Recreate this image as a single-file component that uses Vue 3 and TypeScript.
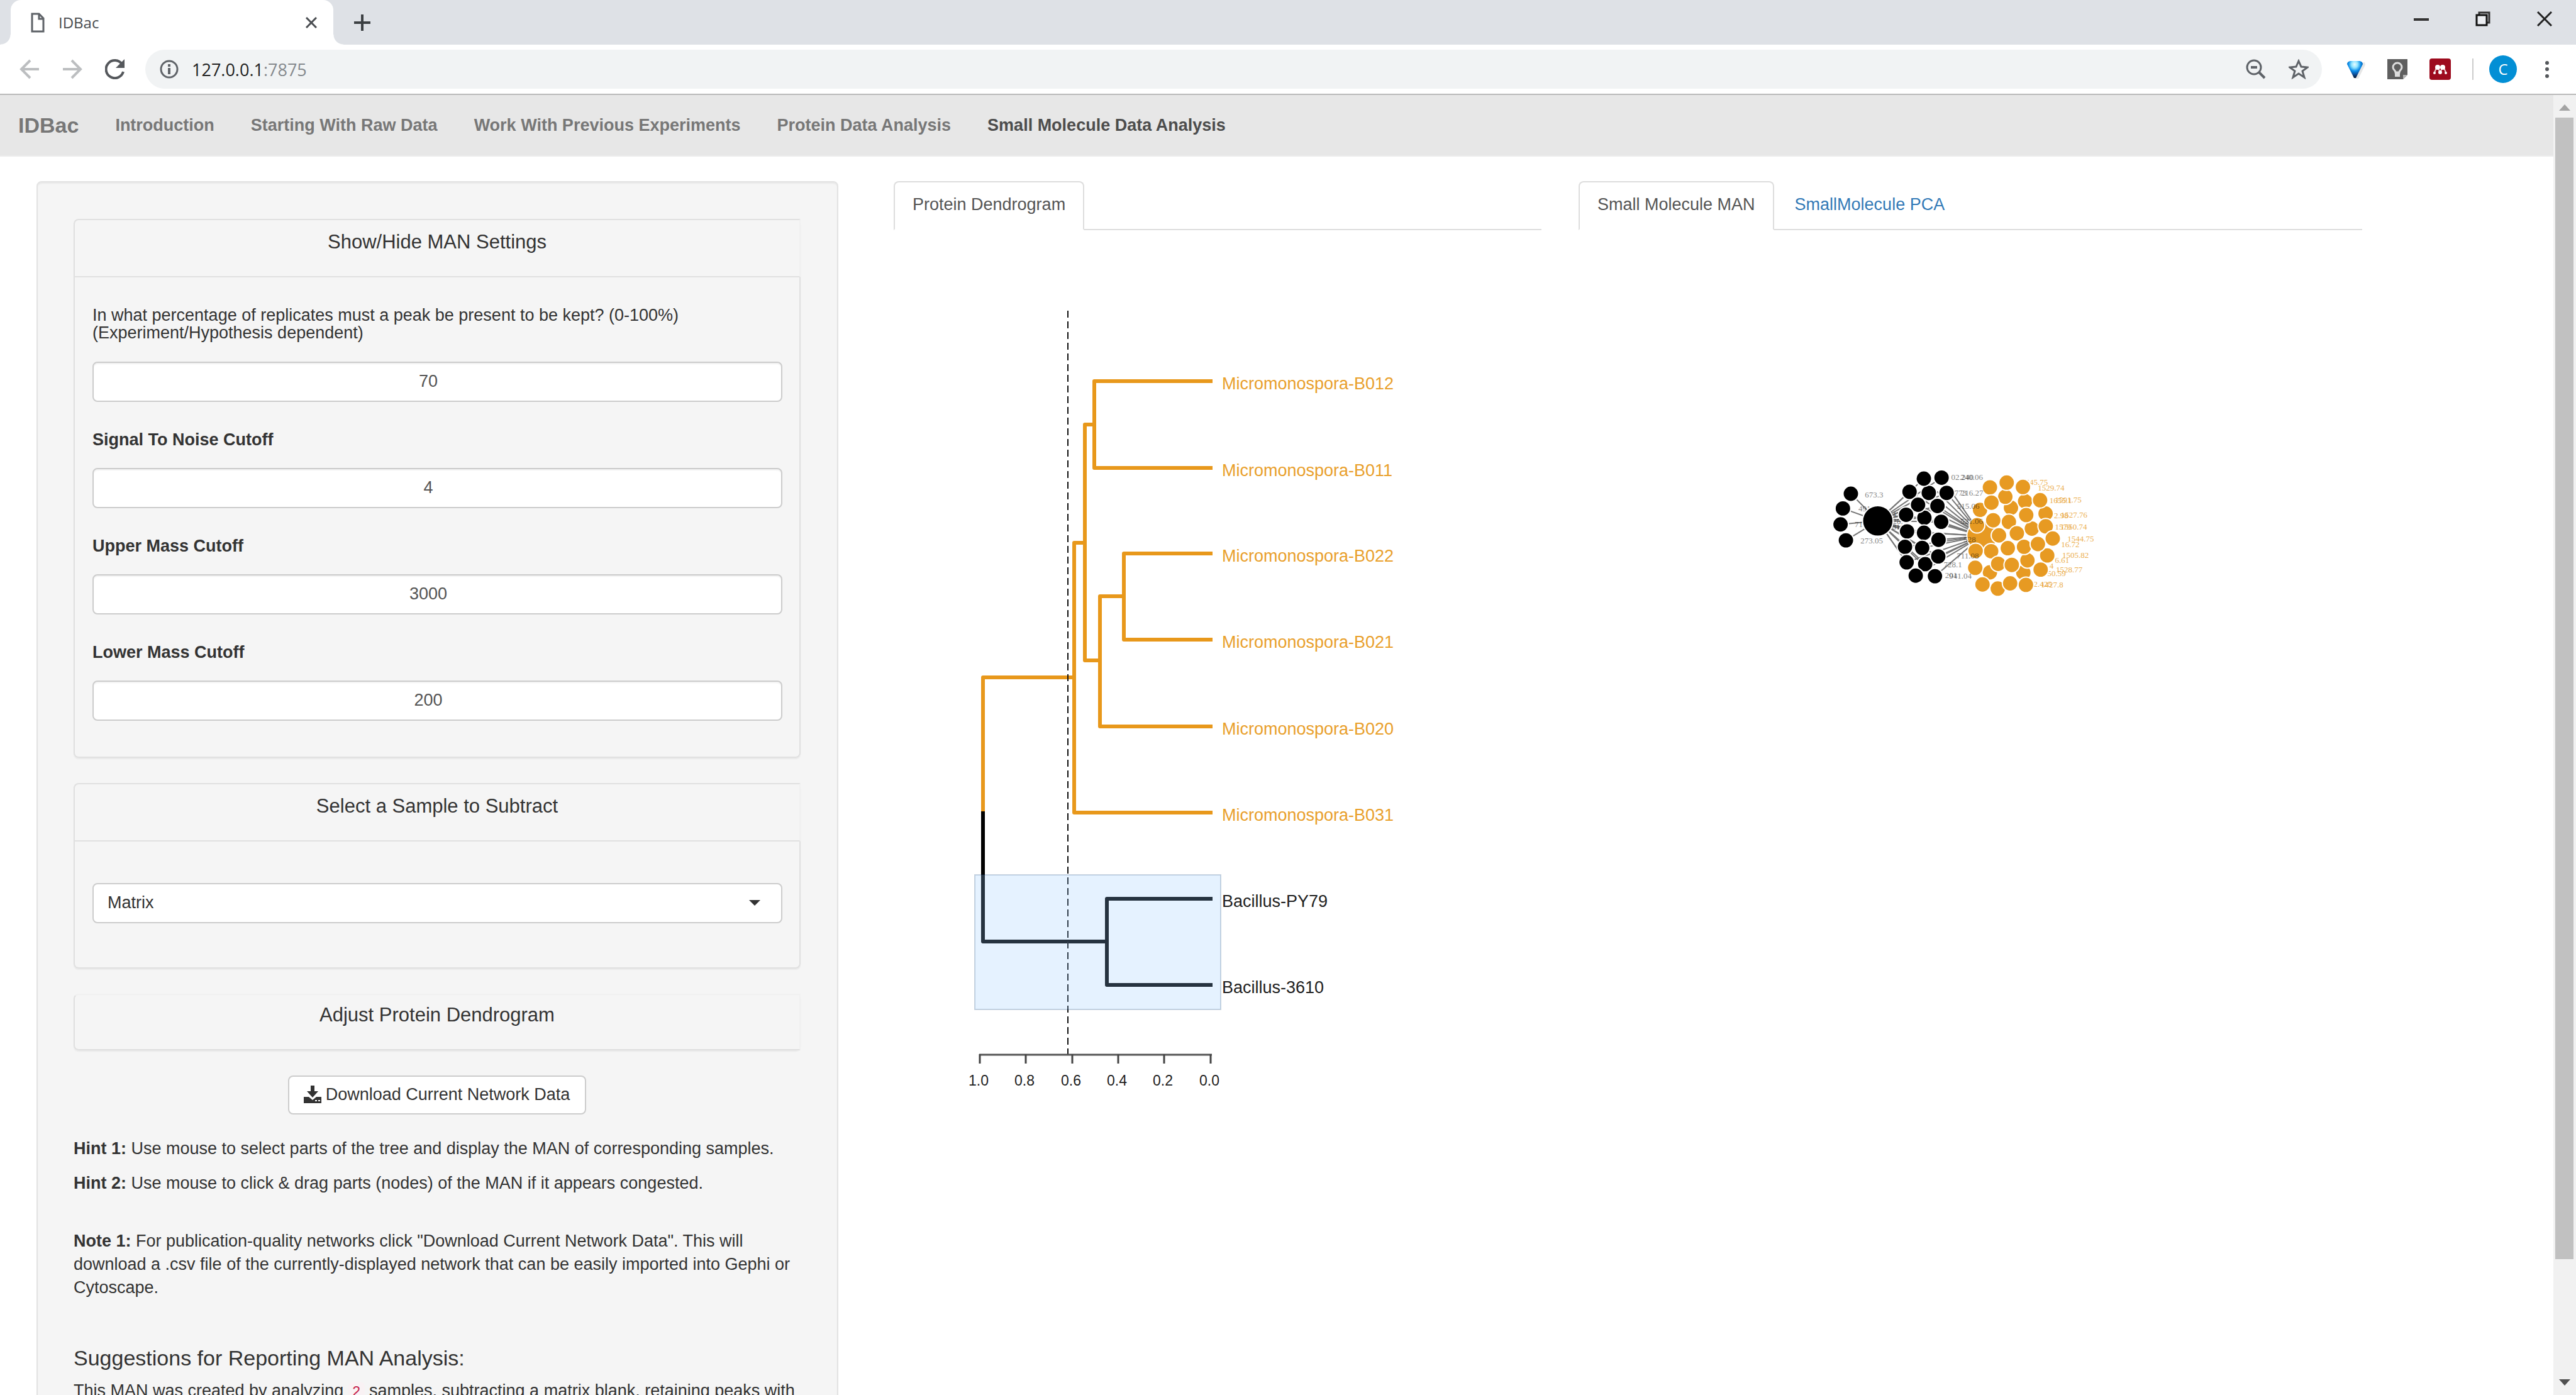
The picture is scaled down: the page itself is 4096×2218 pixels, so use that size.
<script setup lang="ts">
import { ref } from 'vue'

interface Label { x: number; y: number; text: string }
interface Dot { x: number; y: number; r: number }

const navItems = [
  'Introduction',
  'Starting With Raw Data',
  'Work With Previous Experiments',
  'Protein Data Analysis',
  'Small Molecule Data Analysis',
]
const activeNav = 'Small Molecule Data Analysis'

const replicates = ref(70)
const cutoffs = ref([
  { id: 'snr', label: 'Signal To Noise Cutoff', value: 4 },
  { id: 'upper', label: 'Upper Mass Cutoff', value: 3000 },
  { id: 'lower', label: 'Lower Mass Cutoff', value: 200 },
])
const sample = ref('Matrix')

const leaves = [
  { name: 'Micromonospora-B012', y: 240, group: 'orange' },
  { name: 'Micromonospora-B011', y: 378, group: 'orange' },
  { name: 'Micromonospora-B022', y: 514, group: 'orange' },
  { name: 'Micromonospora-B021', y: 651, group: 'orange' },
  { name: 'Micromonospora-B020', y: 789, group: 'orange' },
  { name: 'Micromonospora-B031', y: 926, group: 'orange' },
  { name: 'Bacillus-PY79', y: 1063, group: 'black' },
  { name: 'Bacillus-3610', y: 1200, group: 'black' },
]
const orangeBranches = [
  'M507 240H319V378H507',
  'M507 514H366V651H507',
  'M366 582H328V789H507',
  'M319 309H304V684H328',
  'M304 497H287V926H507',
  'M287 711H142V924',
]
const blackBranches = ['M142 924V1131H339', 'M507 1063H339V1200H507']
const ticks = [
  { x: 137, text: '1.0' },
  { x: 210, text: '0.8' },
  { x: 284, text: '0.6' },
  { x: 357, text: '0.4' },
  { x: 430, text: '0.2' },
  { x: 504, text: '0.0' },
]

// Network coordinates are kept in layout units and scaled when drawn.
const UNIT = 0.2185
const px = (v: number): number => v * UNIT
const dots = (r: number, list: number[][]): Dot[] => list.map(([x, y]) => ({ x, y, r }))

const hub: Dot = { x: 466, y: 491, r: 108 }
const orangeHub: Dot = { x: 1225, y: 600, r: 108 }
const outer = dots(54, [[270, 293], [212, 400], [195, 516], [234, 632]])
const shared = dots(54, [
  [837, 287], [967, 287], [801, 183], [930, 176], [697, 279], [805, 468], [759, 373], [900, 382],
  [672, 446], [927, 497], [802, 577], [679, 567], [908, 628], [664, 679], [789, 687], [676, 792],
  [811, 805], [906, 749], [742, 889], [882, 893],
])
const orange = dots(54, [
  [1282, 865], [1525, 867], [1435, 395], [1394, 315], [1210, 410], [1538, 348], [1687, 437],
  [1420, 498], [1587, 547], [1291, 711], [1555, 778], [1699, 742], [1339, 983], [1546, 448],
  [1282, 247], [1404, 212], [1522, 244], [1647, 340], [1293, 358], [1306, 486], [1188, 522],
  [1478, 581], [1688, 530], [1348, 596], [1739, 619], [1530, 679], [1631, 659], [1412, 689],
  [1178, 709], [1175, 832], [1342, 803], [1441, 811], [1651, 845], [1228, 953], [1429, 945], [1544, 956],
])
const links = [
  ...[...outer, ...shared].map((d) => ({ a: hub, b: d })),
  ...shared.map((d) => ({ a: orangeHub, b: d })),
]
const innerLabels: Label[] = [
  { x: 325, y: 420, text: '491.1' },
  { x: 298, y: 535, text: '713.2' },
  { x: 540, y: 460, text: '643' },
  { x: 545, y: 512, text: '728.4' },
  { x: 570, y: 556, text: '816' },
]
const greyLabels: Label[] = [
  { x: 372, y: 322, text: '673.3' },
  { x: 340, y: 655, text: '273.05' },
  { x: 1000, y: 192, text: '02.240' },
  { x: 1068, y: 190, text: '240.06' },
  { x: 1024, y: 306, text: '773' },
  { x: 1070, y: 306, text: '216.27' },
  { x: 1042, y: 405, text: '515.06' },
  { x: 1068, y: 512, text: '521.06' },
  { x: 1090, y: 645, text: '528' },
  { x: 1040, y: 765, text: '711.08' },
  { x: 945, y: 828, text: '728.1' },
  { x: 955, y: 908, text: '201' },
  { x: 985, y: 912, text: '941.04' },
]
const orangeLabels: Label[] = [
  { x: 1510, y: 230, text: '1545.75' },
  { x: 1630, y: 268, text: '1529.74' },
  { x: 1715, y: 360, text: '1655.1' },
  { x: 1755, y: 358, text: '1591.75' },
  { x: 1748, y: 472, text: '2.98' },
  { x: 1798, y: 466, text: '1527.76' },
  { x: 1755, y: 555, text: '1579' },
  { x: 1795, y: 552, text: '1550.74' },
  { x: 1845, y: 642, text: '1544.75' },
  { x: 1800, y: 682, text: '16.72' },
  { x: 1808, y: 760, text: '1505.82' },
  { x: 1755, y: 798, text: '6.61' },
  { x: 1715, y: 836, text: '4' },
  { x: 1762, y: 866, text: '1528.77' },
  { x: 1700, y: 892, text: '50.59' },
  { x: 1600, y: 968, text: '2.425' },
  { x: 1652, y: 973, text: '1427.8' },
]
</script>

<template>
  <div class="browser">
    <header class="tabstrip">
      <div class="tab">
        <svg class="favicon" viewBox="0 0 22 32" width="22" height="32">
          <path d="M2 2H13L20 9V30H2Z M13 2V10H20" fill="none" stroke="#5f6368" stroke-width="3" />
        </svg>
        <span class="tab-title">IDBac</span>
        <button class="icon-btn" aria-label="Close tab">
          <svg viewBox="0 0 18 18" width="18" height="18"><path d="M1 1L17 17M17 1L1 17" stroke="#4a4d51" stroke-width="3" /></svg>
        </button>
      </div>
      <button class="icon-btn new-tab" aria-label="New tab">
        <svg viewBox="0 0 28 28" width="28" height="28"><path d="M14 1V27M1 14H27" stroke="#3c4043" stroke-width="4" /></svg>
      </button>
      <div class="window-controls">
        <button class="icon-btn" aria-label="Minimize">
          <svg viewBox="0 0 24 24" width="24" height="24"><path d="M0 13H24" stroke="#333" stroke-width="4" /></svg>
        </button>
        <button class="icon-btn" aria-label="Restore">
          <svg viewBox="0 0 24 24" width="24" height="24">
            <path d="M6 6V2H22V18H18" fill="none" stroke="#333" stroke-width="3" />
            <rect x="2" y="6" width="16" height="16" fill="#eceef2" stroke="#111" stroke-width="3" />
          </svg>
        </button>
        <button class="icon-btn" aria-label="Close window">
          <svg viewBox="0 0 24 24" width="24" height="24"><path d="M1 1L23 23M23 1L1 23" stroke="#222" stroke-width="3" /></svg>
        </button>
      </div>
    </header>

    <div class="toolbar">
      <button class="icon-btn" aria-label="Back">
        <svg viewBox="0 0 32 32" width="32" height="32"><path d="M31 16H3M17 2L3 16L17 30" fill="none" stroke="#bcbec0" stroke-width="4" /></svg>
      </button>
      <button class="icon-btn" aria-label="Forward">
        <svg viewBox="0 0 32 32" width="32" height="32"><path d="M1 16H29M15 2L29 16L15 30" fill="none" stroke="#bcbec0" stroke-width="4" /></svg>
      </button>
      <button class="icon-btn" aria-label="Reload">
        <svg viewBox="0 0 32 32" width="32" height="32">
          <path d="M27 8A14 14 0 1 0 29 20" fill="none" stroke="#55585c" stroke-width="4" />
          <path d="M31 0V14H17Z" fill="#55585c" />
        </svg>
      </button>
      <div class="omnibox">
        <svg viewBox="0 0 32 32" width="32" height="32">
          <circle cx="16" cy="16" r="13" fill="none" stroke="#5f6368" stroke-width="3" />
          <path d="M16 14V24M16 8V12" stroke="#5f6368" stroke-width="4" />
        </svg>
        <span class="url">127.0.0.1<span class="port">:7875</span></span>
        <button class="icon-btn" aria-label="Zoom">
          <svg viewBox="0 0 32 32" width="32" height="32">
            <circle cx="13" cy="13" r="11" fill="none" stroke="#5f6368" stroke-width="3" />
            <path d="M8 13H18M21 21L30 30" stroke="#5f6368" stroke-width="4" />
          </svg>
        </button>
        <button class="icon-btn star" aria-label="Bookmark">
          <svg viewBox="0 0 32 32" width="32" height="32">
            <path d="M16 3L20 12L30 13L22 19L25 29L16 23L7 29L10 19L2 13L12 12Z" fill="none" stroke="#5f6368" stroke-width="3" />
          </svg>
        </button>
      </div>
      <div class="extensions">
        <button class="icon-btn" aria-label="Extension V">
          <svg viewBox="0 0 34 34" width="34" height="34">
            <defs>
              <radialGradient id="vfill" cx="0.48" cy="0.2" r="0.8">
                <stop offset="0" stop-color="#eafcff" />
                <stop offset="0.25" stop-color="#8fe4ff" />
                <stop offset="0.5" stop-color="#0a8be8" />
                <stop offset="0.75" stop-color="#0d4a92" />
                <stop offset="1" stop-color="#06152c" />
              </radialGradient>
            </defs>
            <path d="M28 7L32 6L33 10L22 32H16Z" fill="#e6e6e6" />
            <path d="M4 9Q4 5 9 4H24Q29 5 29 9L18 31H15Z" fill="url(#vfill)" />
          </svg>
        </button>
        <button class="icon-btn" aria-label="Extension lamp">
          <svg viewBox="0 0 34 34" width="34" height="34">
            <path d="M1 1H33V26L26 33H1Z" fill="#5f5f5f" />
            <path d="M33 26H26V33Z" fill="#b5b5b5" />
            <path d="M14 22C14 19 10 18 10 14A7 7 0 0 1 24 14C24 18 20 19 20 22Z" fill="none" stroke="#dcdcdc" stroke-width="3" />
            <rect x="13" y="22" width="8" height="7" fill="#dcdcdc" />
          </svg>
        </button>
        <button class="icon-btn" aria-label="Extension library">
          <svg viewBox="0 0 36 36" width="36" height="36">
            <rect x="1" y="1" width="34" height="34" rx="4" fill="#9d0b1e" />
            <path d="M9 23L13 14M18 23L14 15M18 23L22 15M27 23L23 14" stroke="#e8c4c9" stroke-width="2" />
            <circle cx="14" cy="15" r="4" fill="#fff" />
            <circle cx="22" cy="15" r="4" fill="#fff" />
            <circle cx="9" cy="24" r="2" fill="#fff" />
            <circle cx="18" cy="23" r="3" fill="#fff" />
            <circle cx="27" cy="24" r="2" fill="#fff" />
          </svg>
        </button>
        <span class="divider"></span>
        <button class="avatar" aria-label="Profile">C</button>
        <button class="icon-btn" aria-label="Menu">
          <svg viewBox="0 0 8 32" width="8" height="32">
            <circle cx="4" cy="6" r="3" fill="#55585c" /><circle cx="4" cy="16" r="3" fill="#55585c" /><circle cx="4" cy="27" r="3" fill="#55585c" />
          </svg>
        </button>
      </div>
    </div>

    <div class="viewport">
      <div class="page">
        <nav class="navbar">
          <a class="brand" href="#">IDBac</a>
          <a v-for="item in navItems" :key="item" href="#" class="nav-link" :class="{ active: item === activeNav }">{{ item }}</a>
        </nav>

        <main class="content">
          <aside class="well">
            <section class="panel">
              <h4 class="panel-heading">Show/Hide MAN Settings</h4>
              <div class="panel-body">
                <label class="long-label" for="replicates">In what percentage of replicates must a peak be present to be kept? (0-100%)<br />(Experiment/Hypothesis dependent)</label>
                <input id="replicates" v-model="replicates" class="field" type="number" />
                <template v-for="c in cutoffs" :key="c.id">
                  <label class="bold-label" :for="c.id">{{ c.label }}</label>
                  <input :id="c.id" v-model="c.value" class="field" type="number" />
                </template>
              </div>
            </section>

            <section class="panel">
              <h4 class="panel-heading">Select a Sample to Subtract</h4>
              <div class="panel-body select-body">
                <div class="select-wrap">
                  <select v-model="sample" class="select" aria-label="Sample to subtract">
                    <option>Matrix</option>
                  </select>
                  <svg class="caret" viewBox="0 0 18 9" width="18" height="9"><path d="M0 0H18L9 9Z" fill="#333" /></svg>
                </div>
              </div>
            </section>

            <section class="panel">
              <h4 class="panel-heading closed">Adjust Protein Dendrogram</h4>
            </section>

            <button class="download">
              <svg viewBox="0 0 28 28" width="28" height="28">
                <path d="M11 0H17V9H23L14 19L5 9H11Z" fill="#333" />
                <path d="M0 18H8L14 23L20 18H28V28H0Z" fill="#333" />
                <path d="M18 24H21M23 24H26" stroke="#fff" stroke-width="2" />
              </svg>
              Download Current Network Data
            </button>

            <p class="hint"><strong>Hint 1:</strong> Use mouse to select parts of the tree and display the MAN of corresponding samples.</p>
            <p class="hint"><strong>Hint 2:</strong> Use mouse to click &amp; drag parts (nodes) of the MAN if it appears congested.</p>
            <p class="note"><strong>Note 1:</strong> For publication-quality networks click "Download Current Network Data". This will download a .csv file of the currently-displayed network that can be easily imported into Gephi or Cytoscape.</p>
            <h4 class="suggest">Suggestions for Reporting MAN Analysis:</h4>
            <p class="report">This MAN was created by analyzing <code>2</code> samples, subtracting a matrix blank, retaining peaks with</p>
          </aside>

          <section class="dendro">
            <ul class="tabs">
              <li><a class="active" href="#">Protein Dendrogram</a></li>
            </ul>
            <svg class="tree" width="1030" height="1380" viewBox="0 0 1030 1380">
              <g fill="none" stroke-width="6" stroke-linejoin="round">
                <path v-for="d in orangeBranches" :key="d" :d="d" stroke="#e8981b" />
                <path v-for="d in blackBranches" :key="d" :d="d" stroke="#000" />
              </g>
              <path d="M277 128V1311" stroke="#111" stroke-width="2" stroke-dasharray="11 6" />
              <path d="M136 1311H506" stroke="#555" stroke-width="3" />
              <path v-for="t in ticks" :key="t.text" :d="`M${t.x} 1310V1325`" stroke="#444" stroke-width="3" />
              <text v-for="t in ticks" :key="t.text" :x="t.x - 2" y="1360" class="tick">{{ t.text }}</text>
              <rect x="129" y="1025" width="391" height="214" fill="#99ccff" fill-opacity="0.25" stroke="#003366" stroke-opacity="0.2" stroke-width="2" />
              <text v-for="l in leaves" :key="l.name" x="522" :y="l.y + 13" class="leaf" :class="l.group">{{ l.name }}</text>
            </svg>
          </section>

          <section class="network">
            <ul class="tabs">
              <li><a class="active" href="#">Small Molecule MAN</a></li>
              <li><a href="#">SmallMolecule PCA</a></li>
            </ul>
            <svg class="graph" width="460" height="250" viewBox="0 0 460 250">
              <line
                v-for="(l, i) in links" :key="i"
                :x1="px(l.a.x)" :y1="px(l.a.y)" :x2="px(l.b.x)" :y2="px(l.b.y)"
                stroke="#777" stroke-width="2"
              />
              <text v-for="(l, i) in innerLabels" :key="'i' + i" class="mass" :x="px(l.x)" :y="px(l.y)">{{ l.text }}</text>
              <text v-for="(l, i) in orangeLabels" :key="'o' + i" class="mass amber" :x="px(l.x)" :y="px(l.y)">{{ l.text }}</text>
              <g fill="#e79a22" stroke="#fff" stroke-width="2">
                <circle v-for="(d, i) in [orangeHub, ...orange]" :key="i" :cx="px(d.x)" :cy="px(d.y)" :r="px(d.r + 3)" />
              </g>
              <g fill="#000" stroke="#fff" stroke-width="2">
                <circle v-for="(d, i) in [hub, ...outer, ...shared]" :key="i" :cx="px(d.x)" :cy="px(d.y)" :r="px(d.r + 3)" />
              </g>
              <text v-for="(l, i) in greyLabels" :key="'g' + i" class="mass" :x="px(l.x)" :y="px(l.y)">{{ l.text }}</text>
            </svg>
          </section>
        </main>
      </div>

      <div class="scrollbar" aria-hidden="true">
        <svg viewBox="0 0 18 10" width="18" height="10"><path d="M9 0L18 10H0Z" fill="#a3a3a3" /></svg>
        <div class="track"><div class="thumb"></div></div>
        <svg viewBox="0 0 18 10" width="18" height="10"><path d="M0 0H18L9 10Z" fill="#505050" /></svg>
      </div>
    </div>
  </div>
</template>

<style>
html,
body {
  margin: 0;
  background: #fff;
}
</style>

<style scoped>
* {
  box-sizing: border-box;
}
.browser {
  height: 100vh;
  display: flex;
  flex-direction: column;
  overflow: hidden;
  font-family: "Liberation Sans", Arial, sans-serif;
  font-size: 27px;
  line-height: 37px;
  color: #333;
}
svg {
  display: block;
  flex: none;
}
.icon-btn {
  display: block;
  flex: none;
  padding: 0;
  border: 0;
  background: none;
}

.tabstrip {
  flex: none;
  height: 71px;
  display: flex;
  align-items: center;
  padding-left: 17px;
  background: #dee1e6;
}
.tab {
  position: relative;
  width: 513px;
  height: 71px;
  display: flex;
  align-items: center;
  padding: 0 26px 0 32px;
  background: #fff;
  border-radius: 16px 16px 0 0;
}
.tab::before,
.tab::after {
  content: "";
  position: absolute;
  bottom: 0;
  width: 16px;
  height: 16px;
}
.tab::before {
  left: -16px;
  background: radial-gradient(circle at 0 0, transparent 15px, #fff 16px);
}
.tab::after {
  right: -16px;
  background: radial-gradient(circle at 100% 0, transparent 15px, #fff 16px);
}
.tab-title {
  flex: 1;
  margin-left: 22px;
  font-family: "Open Sans", "Noto Sans", sans-serif;
  font-size: 24px;
  color: #4a4d51;
}
.new-tab {
  margin-left: 32px;
}
.window-controls {
  margin-left: auto;
  display: flex;
  gap: 74px;
  padding: 0 38px 12px 0;
}

.toolbar {
  flex: none;
  height: 80px;
  display: flex;
  align-items: center;
  gap: 36px;
  padding: 0 42px 0 31px;
  border-bottom: 2px solid #bababa;
  background: #fff;
}
.omnibox {
  flex: 1;
  height: 62px;
  display: flex;
  align-items: center;
  margin-left: -4px;
  padding: 0 21px 0 22px;
  border-radius: 31px;
  background: #f1f3f4;
}
.url {
  flex: 1;
  margin-left: 20px;
  font-family: "Open Sans", "Noto Sans", sans-serif;
  color: #222;
}
.port {
  color: #85898d;
}
.star {
  margin-left: 36px;
}
.extensions {
  display: flex;
  align-items: center;
  gap: 33px;
}
.divider {
  width: 2px;
  height: 34px;
  background: #ccc;
}
.avatar {
  width: 44px;
  height: 44px;
  margin: 0 11px 0 -8px;
  padding: 0;
  border: 0;
  border-radius: 50%;
  background: #038fd5;
  color: #fff;
  font-family: "Open Sans", sans-serif;
  font-size: 24px;
  line-height: 44px;
}

.viewport {
  flex: 1;
  min-height: 0;
  display: flex;
}
.page {
  flex: 1;
  min-width: 0;
  overflow: hidden;
}
.navbar {
  height: 98px;
  display: flex;
  align-items: center;
  gap: 58px;
  padding-left: 29px;
  background: #e7e7e7;
  border-bottom: 2px solid #ececec;
  font-weight: bold;
}
.navbar a {
  color: #777;
  text-decoration: none;
}
.navbar .brand {
  font-size: 34px;
}
.navbar .active {
  color: #4d4d4d;
}

.content {
  display: grid;
  grid-template-columns: 1275fr 88fr 1030fr 59fr 1246fr 304fr;
  align-items: start;
  padding: 39px 0 0 58px;
}
.well {
  grid-column: 1;
  display: flex;
  flex-direction: column;
  padding: 58px 58px 80px 57px;
  border: 2px solid #e3e3e3;
  border-radius: 8px;
  background: #f5f5f5;
  box-shadow: inset 0 2px 2px rgba(0, 0, 0, 0.05);
}
.dendro {
  grid-column: 3;
}
.network {
  grid-column: 5;
}

.panel {
  margin-bottom: 40px;
  border-radius: 8px;
  box-shadow: 0 2px 2px rgba(0, 0, 0, 0.05);
}
.panel-heading {
  margin: 0;
  padding: 18px 0 37px;
  border: 2px solid #e0e0e0;
  border-right-color: #f1f1f1;
  border-radius: 8px 0 0 0;
  font-size: 31px;
  line-height: 34px;
  font-weight: normal;
  text-align: center;
}
.panel-heading.closed {
  padding: 15px 0 37px;
  border-top-color: #f0f0f0;
  border-radius: 8px 0 0 8px;
}
.panel-body {
  display: flex;
  flex-direction: column;
  padding: 46px 27px 57px 28px;
  border: 2px solid #e0e0e0;
  border-top: 0;
  border-radius: 0 0 8px 8px;
}
.select-body {
  padding: 66px 27px 70px 28px;
}
.long-label {
  margin-bottom: 32px;
  line-height: 28px;
}
.bold-label {
  margin: 41px 0 26px;
  font-weight: bold;
  line-height: 38px;
}
.field,
.select {
  width: 100%;
  height: 64px;
  border: 2px solid #ccc;
  border-radius: 8px;
  background: #fff;
  font-family: inherit;
  font-size: 27px;
}
.field {
  padding: 0 38px 2px 24px;
  color: #555;
  text-align: center;
  appearance: textfield;
  box-shadow: inset 0 2px 2px rgba(0, 0, 0, 0.06);
}
.select-wrap {
  position: relative;
}
.select {
  display: block;
  padding: 0 48px 2px 22px;
  appearance: none;
  color: #333;
}
.caret {
  position: absolute;
  top: 27px;
  right: 35px;
  pointer-events: none;
}
.download {
  align-self: center;
  height: 62px;
  display: flex;
  align-items: center;
  gap: 7px;
  margin-bottom: 36px;
  padding: 0 24px 2px 23px;
  border: 2px solid #ccc;
  border-radius: 8px;
  background: #fff;
  color: #333;
  font-family: inherit;
  font-size: 27px;
}
.hint {
  margin: 0 0 18px;
}
.note {
  margin: 37px 0 74px;
}
.suggest {
  margin: 0 0 15px;
  font-size: 34px;
  line-height: 38px;
  font-weight: normal;
}
.report {
  margin: 0;
}
.report code {
  padding: 4px 6px;
  border-radius: 8px;
  background: #f9f2f4;
  color: #c7254e;
  font-family: "Liberation Mono", monospace;
  font-size: 23px;
}

.tabs {
  display: flex;
  gap: 3px;
  margin: 0;
  padding: 0;
  list-style: none;
  border-bottom: 2px solid #ddd;
}
.tabs li {
  margin-bottom: -2px;
}
.tabs a {
  display: block;
  padding: 16px 28px 20px;
  border: 2px solid transparent;
  border-radius: 8px 8px 0 0;
  line-height: 38px;
  color: #337ab7;
  text-decoration: none;
}
.tabs a.active {
  border-color: #ddd;
  border-bottom-color: #fff;
  background: #fff;
  color: #555;
}
.leaf {
  font-size: 27px;
}
.leaf.orange {
  fill: #e9a02c;
}
.leaf.black {
  fill: #222;
}
.tick {
  font-size: 23px;
  text-anchor: middle;
  fill: #222;
}
.graph {
  margin: 355px 0 0 374px;
}
.mass {
  font-family: "Liberation Serif", serif;
  font-size: 13px;
  fill: #000;
  opacity: 0.5;
}
.mass.amber {
  fill: #e79a22;
  opacity: 0.8;
}

.scrollbar {
  flex: none;
  width: 36px;
  display: flex;
  flex-direction: column;
  align-items: center;
  padding: 15px 0;
  background: #f1f1f1;
}
.track {
  flex: 1;
  align-self: stretch;
  padding: 11px 4px 11px 3px;
}
.thumb {
  height: 91%;
  background: #c1c1c1;
}
</style>
